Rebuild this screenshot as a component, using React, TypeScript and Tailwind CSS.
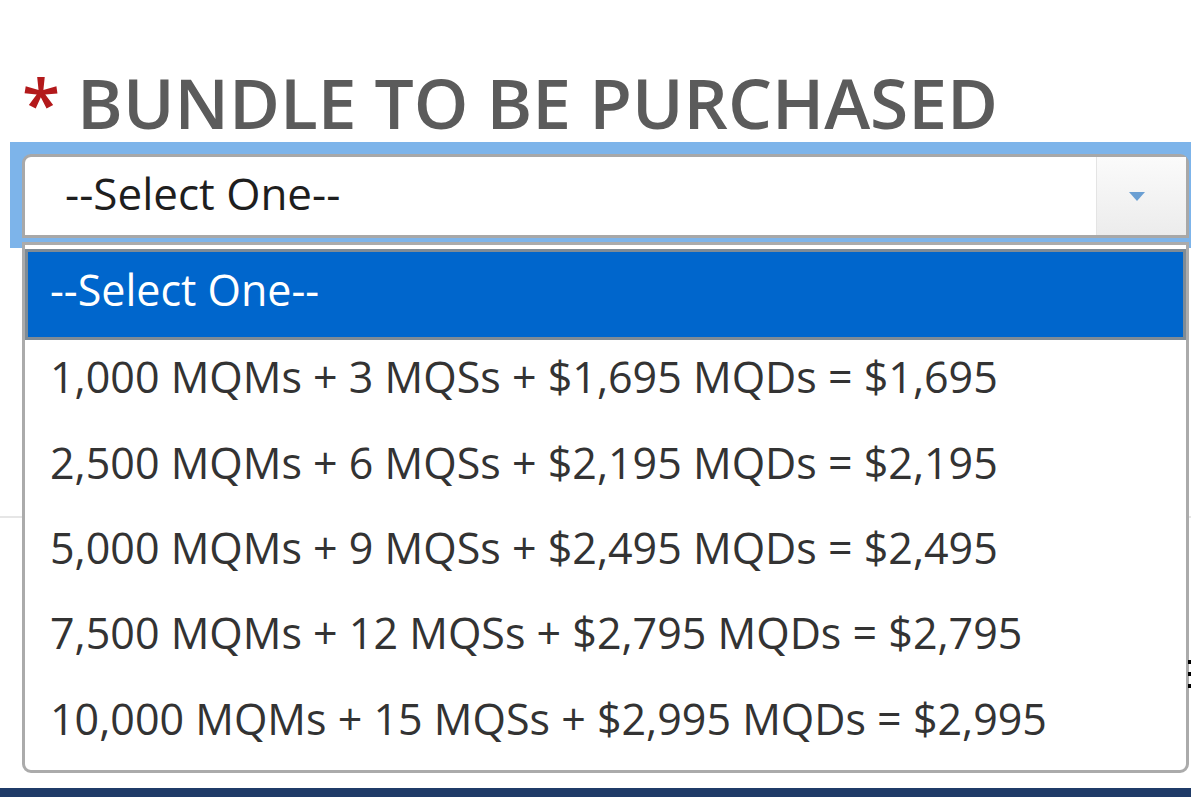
import React from 'react';

const options = [
  '1,000 MQMs + 3 MQSs + $1,695 MQDs = $1,695',
  '2,500 MQMs + 6 MQSs + $2,195 MQDs = $2,195',
  '5,000 MQMs + 9 MQSs + $2,495 MQDs = $2,495',
  '7,500 MQMs + 12 MQSs + $2,795 MQDs = $2,795',
  '10,000 MQMs + 15 MQSs + $2,995 MQDs = $2,995',
];

export default function App() {
  return (
    <div className="relative h-[797px] w-[1191px] overflow-hidden bg-white font-['Open_Sans',sans-serif]">
      <h1 className="flex items-baseline pl-[22px] pt-[58px] text-[69.5px] font-semibold leading-[88px] text-[#5b5b5b]">
        <span className="mr-[17px] text-[#b3191b]">*</span>
        BUNDLE TO BE PURCHASED
      </h1>

      {/* focused select, blue glow behind */}
      <div className="ml-[10px] mt-[-4px] h-[106px] bg-[#7db4ea] pl-[12px] pt-[12px]">
        <div className="flex h-[84px] w-[1167px] rounded-t-[9px] border-[3px] border-[#a8a8a8] bg-white">
          <div className="flex flex-1 items-center pb-[6px] pl-[40px] text-[44px] text-[#1e1e1e]">--Select One--</div>
          <div className="flex w-[90px] items-center justify-center border-l border-[#e4e4e4] bg-gradient-to-b from-[#fbfbfb] to-[#ececec] pr-[10px]">
            <svg width="16" height="9" viewBox="0 0 16 9">
              <path d="M0 0h16L8 9z" fill="#6a9fd3" />
            </svg>
          </div>
        </div>
      </div>

      <div className="mt-[268px] h-[2px] w-full bg-[#e6e6e6]" />

      {/* open dropdown */}
      <div className="absolute left-[22px] top-[242px] w-[1167px] rounded-b-[9px] border-[3px] border-[#ababab] bg-white pb-[4px] pt-[4px]">
        <div className="flex h-[91px] items-center border-[3px] border-[#7f8b95] bg-[#0066cc] pb-[8px] pl-[22px] text-[43px] text-white">
          --Select One--
        </div>
        {options.map((o) => (
          <div key={o} className="flex h-[85.3px] items-center pb-[10px] pl-[25px] text-[43px] text-[#333333]">
            {o}
          </div>
        ))}
      </div>

      <div className="absolute right-0 top-[660px] flex flex-col gap-[8px]">
        <span className="h-[4px] w-[3px] bg-black" />
        <span className="h-[4px] w-[3px] bg-black" />
        <span className="h-[4px] w-[3px] bg-black" />
      </div>

      <div className="absolute bottom-0 left-0 h-[9px] w-full bg-[#1f3b68]" />
    </div>
  );
}
